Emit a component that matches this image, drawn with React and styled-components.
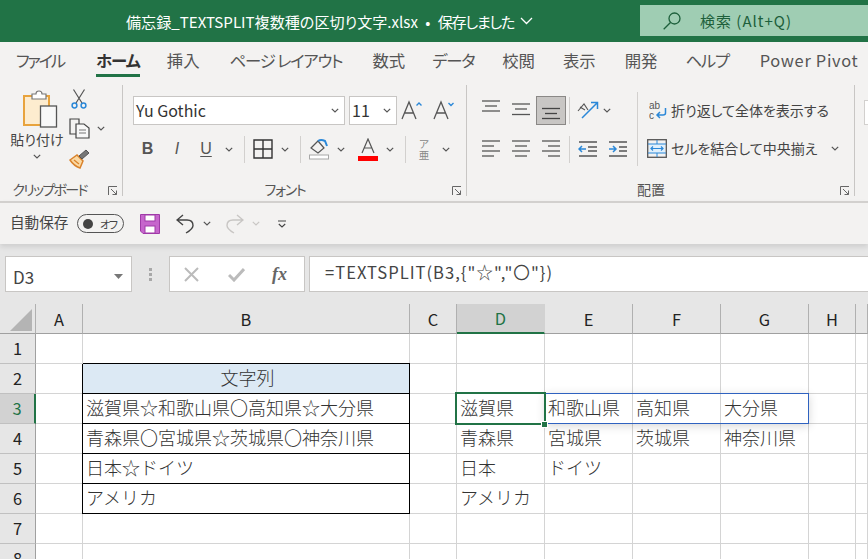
import React from 'react'
import styled, { createGlobalStyle } from 'styled-components'

const FONT = '"Noto Sans CJK JP", "Noto Sans", sans-serif'

const GlobalStyle = createGlobalStyle`
    html, body {
        margin: 0;
        padding: 0;
        height: 100%;
        overflow: hidden;
        background: #e6e6e6;
    }
    * { box-sizing: border-box; }
    body { font-family: ${ FONT }; color: #444; font-feature-settings: "palt"; }
`

const Window = styled.div`
    width: 868px;
    height: 559px;
    overflow: hidden;
    display: flex;
    flex-direction: column;
`

/* title bar */
const TitleBar = styled.header`
    height: 42px;
    flex: none;
    background: #217346;
    display: flex;
    align-items: flex-start;
`
const DocTitle = styled.div`
    margin-left: 126px;
    width: 514px;
    height: 42px;
    display: flex;
    align-items: center;
    gap: 6px;
    color: #fff;
    font-size: 15.1px;
    word-spacing: 4px;
    white-space: nowrap;
`
const SavedState = styled.span`
    letter-spacing: -1.3px;
`
const SearchBox = styled.div`
    margin-top: 5px;
    flex: 1;
    height: 31px;
    background: #9fcdb3;
    display: flex;
    align-items: center;
    padding-left: 23px;
    gap: 19px;
    color: #1d5f3b;
    font-size: 15px;
    letter-spacing: 1px;
`

/* tabs */
const TabBar = styled.nav`
    height: 36px;
    flex: none;
    background: #f3f2f1;
    display: flex;
    align-items: flex-start;
`
const Tab = styled.div`
    height: 35px;
    margin-left: ${ props => props.$gap }px;
    padding-top: 6px;
    font-size: 16.4px;
    line-height: 24px;
    white-space: nowrap;
    letter-spacing: ${ props => props.$spacing || 0 }px;
    color: ${ props => props.$active ? '#333' : '#555' };
    font-weight: ${ props => props.$active ? 700 : 400 };
    border-bottom: 3px solid ${ props => props.$active ? '#217346' : 'transparent' };
`

/* ribbon */
const Ribbon = styled.section`
    height: 123px;
    flex: none;
    background: #f3f2f1;
    display: flex;
`
const Group = styled.div`
    width: ${ props => props.$width }px;
    flex: none;
    height: 118px;
    display: flex;
    flex-direction: column;
    position: relative;
    &::after {
        content: '';
        position: absolute;
        right: 0;
        top: 7px;
        bottom: 0;
        width: 1px;
        background: #c8c6c4;
    }
`
const GroupBody = styled.div`
    flex: 1;
    display: flex;
    padding-left: ${ props => props.$pad || 0 }px;
`
const GroupFooter = styled.div`
    height: 20px;
    position: relative;
    display: flex;
    justify-content: center;
    padding: 3px ${ props => props.$right ?? 20 }px 0 0;
    font-size: 14px;
    line-height: 20px;
    white-space: nowrap;
    letter-spacing: ${ props => props.$spacing || 0 }px;
    color: #555;
`
const Launcher = styled.svg`
    position: absolute;
    right: 5px;
    top: 10px;
    width: 10px;
    height: 10px;
`
const ToolRows = styled.div`
    padding-top: 17px;
    display: flex;
    flex-direction: column;
    gap: 9px;
`
const ToolRow = styled.div`
    height: 30px;
    display: flex;
    align-items: center;
`
const Tool = styled.div`
    width: ${ props => props.$w || 30 }px;
    height: 29px;
    flex: none;
    display: flex;
    align-items: center;
    justify-content: center;
    color: #555;
`
const ActiveTool = styled(Tool)`
    background: #c8c6c4;
    border: 1px solid #8a8886;
`
const BoldLetter = styled.span`
    font-family: "Liberation Sans", sans-serif;
    font-size: 16px;
    font-weight: ${ props => props.$bold ? 700 : 400 };
    font-style: ${ props => props.$italic ? 'italic' : 'normal' };
    text-decoration: ${ props => props.$under ? 'underline' : 'none' };
    text-underline-offset: 2px;
    color: #555;
`
const Phonetic = styled.span`
    font-size: 10.5px;
    line-height: 11px;
    width: 12px;
    text-align: center;
    color: #888;
`
const Sep = styled.div`
    width: 1px;
    height: 27px;
    flex: none;
    background: #d2d0ce;
    margin: 0 ${ props => props.$r ?? 5 }px 0 ${ props => props.$l ?? 6 }px;
`
const TallSep = styled.div`
    width: 1px;
    height: 74px;
    margin: 14px 11px 0 4px;
    flex: none;
    background: #d2d0ce;
`
const Select = styled.div`
    height: 29px;
    width: ${ props => props.$w }px;
    margin-right: ${ props => props.$mr || 0 }px;
    flex: none;
    background: #fff;
    border: 1px solid #c8c6c4;
    display: flex;
    align-items: center;
    justify-content: space-between;
    padding: 0 5px 0 2px;
    font-size: 16px;
    color: #333;
`
const PasteButton = styled.div`
    width: 66px;
    padding: 12px 0 0 12px;
    display: flex;
    flex-direction: column;
    align-items: flex-start;
    font-size: 14px;
    color: #444;
    line-height: 18px;
    white-space: nowrap;
    & > svg { margin-left: 10px; }
`
const PasteLabel = styled.div`
    margin-top: 2px;
    width: 50px;
    display: flex;
    flex-direction: column;
    align-items: center;
    gap: 6px;
`
const ClipTools = styled.div`
    padding-top: 10px;
    display: flex;
    flex-direction: column;
    gap: 9px;
`
const ClipTool = styled.div`
    height: 21px;
    display: flex;
    align-items: center;
    gap: 7px;
    margin-left: ${ props => props.$ml || 0 }px;
`
const WideTool = styled.div`
    height: 29px;
    display: flex;
    align-items: center;
    font-size: 14px;
    color: #444;
    white-space: nowrap;
    gap: 4px;
    margin-left: ${ props => props.$ml || 0 }px;
`
const NextGroupEdge = styled.div`
    margin: 22px 0 0 9px;
    flex: 1;
    height: 25px;
    background: #fff;
    border: 1px solid #d2d0ce;
    border-right: 0;
`

/* quick access */
const Quick = styled.div`
    height: 43px;
    flex: none;
    background: #f3f2f1;
    border-top: 2px solid #d2d0ce;
    box-shadow: 0 3px 5px rgba(0, 0, 0, 0.1);
    display: flex;
    align-items: center;
    padding-left: 10px;
    font-size: 14.6px;
    color: #444;
    position: relative;
`
const ToggleLabel = styled.span`
    width: 67px;
    flex: none;
    position: relative;
    top: -2px;
    font-feature-settings: normal;
`
const AutoToggle = styled.div`
    width: 47px;
    height: 19px;
    flex: none;
    border: 1px solid #555;
    border-radius: 10px;
    display: flex;
    align-items: center;
    padding-left: 5px;
    gap: 7px;
    font-size: 11px;
    letter-spacing: -1.4px;
    color: #444;
    margin-right: 16px;
    &::before {
        content: '';
        width: 10px;
        height: 10px;
        border-radius: 50%;
        background: #444;
    }
`
const QuickItem = styled.div`
    margin-left: ${ props => props.$ml || 0 }px;
    display: flex;
    align-items: center;
    flex: none;
`

/* formula bar */
const FormulaArea = styled.div`
    height: 60px;
    flex: none;
    background: #e6e6e6;
    padding-top: 12px;
    padding-left: 5px;
    display: flex;
    align-items: flex-start;
`
const NameBox = styled.div`
    width: 127px;
    height: 36px;
    flex: none;
    background: #fff;
    border: 1px solid #c8c6c4;
    display: flex;
    align-items: center;
    justify-content: space-between;
    padding: 5px 8px 0 7px;
    font-size: 17px;
    color: #444;
`
const Grip = styled.div`
    width: 37px;
    height: 36px;
    flex: none;
    display: flex;
    flex-direction: column;
    align-items: center;
    justify-content: center;
    gap: 2px;
    & > i {
        width: 3px;
        height: 3px;
        background: #a8a8a8;
    }
`
const FormulaButtons = styled.div`
    width: 136px;
    height: 36px;
    flex: none;
    background: #fff;
    border: 1px solid #c8c6c4;
    display: flex;
    align-items: center;
    padding-left: 14px;
    gap: 29px;
`
const Fx = styled.span`
    font-family: "Liberation Serif", serif;
    font-style: italic;
    font-weight: 700;
    font-size: 18px;
    color: #666;
    margin-left: -2px;
`
const FormulaInput = styled.div`
    margin-left: 4px;
    flex: 1;
    height: 36px;
    background: #fff;
    border-top: 1px solid #c8c6c4;
    border-bottom: 1px solid #c8c6c4;
    border-left: 1px solid #c8c6c4;
    padding-left: 15px;
    font-size: 16.6px;
    letter-spacing: 1px;
    line-height: 31px;
    color: #444;
    white-space: nowrap;
    font-feature-settings: normal;
`

/* sheet */
const Sheet = styled.div`
    flex: 1;
    position: relative;
    display: grid;
    grid-template-columns: 36px 47px 327px 47px 88px 88px 88px 88px 47px 1fr;
    grid-auto-rows: 30px;
    background: #fff;
    overflow: hidden;
    font-feature-settings: normal;
`
const ColHead = styled.div`
    background: ${ props => props.$active ? '#d2d2d2' : '#e6e6e6' };
    border-right: 1px solid ${ props => props.$active ? '#d2d2d2' : '#b0b0b0' };
    border-bottom: ${ props => props.$active ? '2px solid #217346' : '1px solid #a0a0a0' };
    color: ${ props => props.$active ? '#217346' : '#222' };
    display: flex;
    align-items: center;
    justify-content: center;
    font-size: 16.4px;
    position: relative;
`
const Corner = styled(ColHead)`
    &::after {
        content: '';
        position: absolute;
        left: 10px;
        top: 5px;
        width: 22px;
        height: 22px;
        background: #b4b4b4;
        clip-path: polygon(100% 0, 100% 100%, 0 100%);
    }
`
const RowHead = styled.div`
    background: ${ props => props.$active ? '#d2d2d2' : '#e6e6e6' };
    border-right: ${ props => props.$active ? '2px solid #217346' : '1px solid #a0a0a0' };
    border-bottom: 1px solid #c0c0c0;
    color: ${ props => props.$active ? '#217346' : '#222' };
    display: flex;
    align-items: center;
    justify-content: center;
    padding-bottom: 2px;
    font-size: 16.4px;
`
const Cell = styled.div`
    border-right: 1px solid ${ props => props.$boxed ? '#000' : '#d4d4d4' };
    border-bottom: 1px solid ${ props => props.$boxed ? '#000' : '#d4d4d4' };
    background: ${ props => props.$head ? '#dce9f4' : '#fff' };
    box-shadow: ${ props => props.$boxed ? '-1px 0 0 #000, 0 -1px 0 #000' : 'none' };
    padding: 0 0 3px 3px;
    display: flex;
    align-items: center;
    justify-content: ${ props => props.$head ? 'center' : 'flex-start' };
    font-size: 18px;
    font-weight: 300;
    color: #333;
    white-space: nowrap;
    overflow: visible;
`
const SpillRange = styled.div`
    position: absolute;
    left: 545px;
    top: 89px;
    width: 264px;
    height: 31px;
    border: 1px solid #2f62c0;
    border-left: 0;
    box-shadow: 0 2px 10px rgba(0, 0, 0, 0.16);
    pointer-events: none;
`
const ActiveCell = styled.div`
    position: absolute;
    left: 455px;
    top: 88px;
    width: 91px;
    height: 33px;
    border: 2px solid #217346;
`
const FillHandle = styled.div`
    position: absolute;
    left: 541px;
    top: 117px;
    width: 7px;
    height: 7px;
    background: #217346;
    border: 1px solid #fff;
`

/* drawings */
const Chevron = ({ color = '#555', w = 8 }) => (
    <svg width={ w } height="5" viewBox="0 0 8 5" fill="none" stroke={ color } strokeWidth="1.2">
        <path d="M0.8 0.8 L4 4 L7.2 0.8" />
    </svg>
)

const LauncherIcon = () => (
    <Launcher viewBox="0 0 10 10" fill="none" stroke="#666" strokeWidth="1">
        <path d="M0.5 9 V0.5 H9 M3 3 L8.5 8.5 M8.5 4.5 V8.5 H4.5" />
    </Launcher>
)

const PasteIcon = () => (
    <svg width="36" height="38" viewBox="0 0 36 38">
        <rect x="2" y="6" width="25" height="29" fill="#fdeccf" stroke="#e8a33d" strokeWidth="2" />
        <path d="M10 6 V4 H14 Q14 1 17 1 Q20 1 20 4 H24 V9 H10 Z" fill="#fff" stroke="#777" strokeWidth="1.2" />
        <rect x="18.5" y="16" width="16" height="21" fill="#f8f8f8" stroke="#555" strokeWidth="1.3" />
    </svg>
)

const ScissorsIcon = () => (
    <svg width="16" height="20" viewBox="0 0 16 20" fill="none" strokeWidth="1.2">
        <path d="M2.5 0.5 L11 14 M13.5 0.5 L5 14" stroke="#555" />
        <circle cx="3.5" cy="16.5" r="2.4" stroke="#2b88d8" strokeWidth="1.5" />
        <circle cx="12.5" cy="16.5" r="2.4" stroke="#2b88d8" strokeWidth="1.5" />
    </svg>
)

const CopyIcon = () => (
    <svg width="21" height="21" viewBox="0 0 21 21" fill="none" stroke="#444" strokeWidth="1.2">
        <path d="M7 16 H1 V1 H10 V6" />
        <path d="M7 6 H15 L20 10 V20 H7 Z" fill="#f8f8f8" />
        <path d="M10 12 H17 M10 15 H17" stroke="#777" />
    </svg>
)

const BrushIcon = () => (
    <svg width="21" height="20" viewBox="0 0 21 20">
        <path d="M1 11 L8 6 L14 12 L11 19 Q5 17 1 11 Z" fill="#fbd9a3" stroke="#d9822b" strokeWidth="1.5" />
        <path d="M5 11 L10 15" stroke="#d9822b" strokeWidth="1.2" />
        <path d="M10 7 L17 1 L20 4 L13 10 Z" fill="#777" stroke="#555" />
    </svg>
)

const GrowFont = ({ down }) => (
    <svg width="22" height="22" viewBox="0 0 22 22" fill="none" stroke="#555" strokeWidth="1.3">
        <path d="M1 20 L8 3 L15 20 M3.6 14 H12.4" />
        <path d={ down ? 'M15.5 4 L18 6.5 L20.5 4' : 'M15.5 6.5 L18 4 L20.5 6.5' } stroke="#2b88d8" strokeWidth="1.4" />
    </svg>
)

const BordersIcon = () => (
    <svg width="20" height="20" viewBox="0 0 20 20" fill="none" stroke="#333" strokeWidth="1.4">
        <path d="M1 1 H19 V19 H1 Z M10 1 V19 M1 10 H19" />
    </svg>
)

const FillIcon = () => (
    <svg width="22" height="22" viewBox="0 0 22 22">
        <path d="M3 10 L10 3 L16 10 L10 15 Z" fill="none" stroke="#555" strokeWidth="1.2" />
        <path d="M10 3 Q13 1 17 3 L19 8" fill="none" stroke="#2b88d8" strokeWidth="2" />
        <rect x="1.5" y="17" width="19" height="4" fill="#fff" stroke="#a8a8a8" />
    </svg>
)

const FontColorIcon = () => (
    <svg width="20" height="23" viewBox="0 0 20 23">
        <path d="M4 15 L10 1 L16 15 M6 10 H14" fill="none" stroke="#555" strokeWidth="1.2" />
        <rect x="0" y="18" width="20" height="5" fill="#f00" />
    </svg>
)

const Lines = ({ rows, color = '#555' }) => (
    <svg width="20" height="20" viewBox="0 0 20 20" fill="none" stroke={ color } strokeWidth="1.3">
        { rows.map(([y, x1, x2]) => <path key={ y } d={ `M${ x1 } ${ y } H${ x2 }` } />) }
    </svg>
)

const OrientIcon = () => (
    <svg width="22" height="20" viewBox="0 0 22 20" fill="none">
        <path d="M5 18 L20 3 M14 2.5 H20.5 V9" stroke="#2b88d8" strokeWidth="1.5" />
        <path d="M1 11 L7 4 L11 10 M3 7 L8 10" stroke="#555" strokeWidth="1.1" />
    </svg>
)

const IndentIcon = ({ flip }) => (
    <svg width="20" height="18" viewBox="0 0 20 18" fill="none" strokeWidth="1.3">
        <path d={ flip ? 'M1 2 H19 M11 7 H19 M11 11 H19 M1 16 H19' : 'M1 2 H19 M10 7 H19 M10 11 H19 M1 16 H19' } stroke="#555" />
        <path d={ flip ? 'M1 9 H8 M5 6 L8 9 L5 12' : 'M1 9 H8 M4 6 L1 9 L4 12' } stroke="#2b88d8" strokeWidth="1.5" />
    </svg>
)

const WrapIcon = () => (
    <svg width="18" height="20" viewBox="0 0 18 20" fill="none">
        <text x="0" y="9" fontSize="10" fill="#555" fontFamily="Liberation Sans">ab</text>
        <text x="0" y="19" fontSize="10" fill="#555" fontFamily="Liberation Sans">c</text>
        <path d="M16.5 8 V13 Q16.5 15 14 15 H8 M11 12 L8 15 L11 18" stroke="#2b88d8" strokeWidth="1.5" />
    </svg>
)

const MergeIcon = () => (
    <svg width="20" height="19" viewBox="0 0 20 19" fill="none">
        <rect x="0.7" y="0.7" width="18.6" height="17.6" stroke="#555" strokeWidth="1.3" />
        <rect x="2" y="5" width="16" height="9" fill="#e1f0fb" />
        <path d="M1 5 H19 M1 14 H19 M10 1 V5 M10 14 V18" stroke="#2b88d8" strokeWidth="1" />
        <path d="M4 9.5 H16 M6 7.5 L4 9.5 L6 11.5 M14 7.5 L16 9.5 L14 11.5" stroke="#2b88d8" strokeWidth="1.2" />
    </svg>
)

const SaveIcon = () => (
    <svg width="20" height="20" viewBox="0 0 20 20">
        <path d="M0.5 0.5 H19.5 V19.5 H3 L0.5 17 Z" fill="#c666cc" stroke="#a03aa8" />
        <rect x="5" y="1" width="10" height="6" fill="#fff" stroke="#a03aa8" />
        <rect x="5" y="12" width="10" height="7" fill="#fff" stroke="#a03aa8" />
    </svg>
)

const UndoIcon = ({ redo }) => (
    <svg width="19" height="20" viewBox="0 0 19 20" fill="none" stroke={ redo ? '#c8c6c4' : '#444' } strokeWidth="1.4"
        style={ redo ? { transform: 'scaleX(-1)' } : undefined }>
        <path d="M7 1 L1 6 L7 11 M1 6 H11 Q17 6 17 11.5 Q17 15 10 19" />
    </svg>
)

const SearchGlass = () => (
    <svg width="18" height="18" viewBox="0 0 18 18" fill="none" stroke="#1d5f3b" strokeWidth="1.3">
        <circle cx="11.5" cy="6.5" r="5.5" />
        <path d="M7.5 10.5 L0.7 17.3" />
    </svg>
)

// gap before each tab, spacing squeezes the katakana names
const ribbonTabs = [
    { name: 'ファイル', gap: 16, spacing: -2.2 },
    { name: 'ホーム', gap: 32, spacing: -1, active: true },
    { name: '挿入', gap: 27 },
    { name: 'ページ レイアウト', gap: 30, spacing: -1.2 },
    { name: '数式', gap: 30 },
    { name: 'データ', gap: 27, spacing: -1.3 },
    { name: '校閲', gap: 28 },
    { name: '表示', gap: 28 },
    { name: '開発', gap: 29 },
    { name: 'ヘルプ', gap: 28, spacing: -1.3 },
    { name: 'Power Pivot', gap: 31, spacing: 0.7 },
]

const columns = ['A', 'B', 'C', 'D', 'E', 'F', 'G', 'H', '']

// row -> cell text by column, boxed is the table in column B
const sheetRows = [
    { },
    { B: '文字列' },
    { B: '滋賀県☆和歌山県〇高知県☆大分県', D: '滋賀県', E: '和歌山県', F: '高知県', G: '大分県' },
    { B: '青森県〇宮城県☆茨城県〇神奈川県', D: '青森県', E: '宮城県', F: '茨城県', G: '神奈川県' },
    { B: '日本☆ドイツ', D: '日本', E: 'ドイツ' },
    { B: 'アメリカ', D: 'アメリカ' },
    { },
    { },
]

const App = () => (
    <Window>
        <GlobalStyle />
        <TitleBar>
            <DocTitle>
                <span>備忘録_TEXTSPLIT複数種の区切り文字.xlsx • <SavedState>保存しました</SavedState></span>
                <svg width="13" height="8" viewBox="0 0 13 8" fill="none" stroke="#fff" strokeWidth="1.3">
                    <path d="M1 1 L6.5 6.5 L12 1" />
                </svg>
            </DocTitle>
            <SearchBox>
                <SearchGlass />
                <span>検索 (Alt+Q)</span>
            </SearchBox>
        </TitleBar>

        <TabBar>
            { ribbonTabs.map(tab => (
                <Tab key={ tab.name } $gap={ tab.gap } $spacing={ tab.spacing } $active={ tab.active }>{ tab.name }</Tab>
            )) }
        </TabBar>

        <Ribbon>
            <Group $width={ 123 }>
                <GroupBody>
                    <PasteButton>
                        <PasteIcon />
                        <PasteLabel>
                            貼り付け
                            <Chevron />
                        </PasteLabel>
                    </PasteButton>
                    <ClipTools>
                        <ClipTool $ml={ 5 }><ScissorsIcon /></ClipTool>
                        <ClipTool $ml={ 3 }><CopyIcon /><Chevron /></ClipTool>
                        <ClipTool $ml={ 3 }><BrushIcon /></ClipTool>
                    </ClipTools>
                </GroupBody>
                <GroupFooter $spacing={ -1.7 } $right={ 24 }>クリップボード<LauncherIcon /></GroupFooter>
            </Group>

            <Group $width={ 344 }>
                <GroupBody $pad={ 10 }>
                    <ToolRows>
                        <ToolRow>
                            <Select $w={ 212 } $mr={ 4 }>Yu Gothic<Chevron /></Select>
                            <Select $w={ 48 }>11<Chevron /></Select>
                            <Tool $w={ 30 }><GrowFont /></Tool>
                            <Tool $w={ 33 }><GrowFont down /></Tool>
                        </ToolRow>
                        <ToolRow>
                            <Tool $w={ 29 }><BoldLetter $bold>B</BoldLetter></Tool>
                            <Tool $w={ 30 }><BoldLetter $italic>I</BoldLetter></Tool>
                            <Tool $w={ 28 }><BoldLetter $under>U</BoldLetter></Tool>
                            <Tool $w={ 18 }><Chevron /></Tool>
                            <Sep />
                            <Tool $w={ 26 }><BordersIcon /></Tool>
                            <Tool $w={ 18 }><Chevron /></Tool>
                            <Sep />
                            <Tool $w={ 26 }><FillIcon /></Tool>
                            <Tool $w={ 18 }><Chevron /></Tool>
                            <Tool $w={ 36 }><FontColorIcon /></Tool>
                            <Tool $w={ 8 }><Chevron /></Tool>
                            <Sep $l={ 11 } />
                            <Tool $w={ 26 }><Phonetic>ア亜</Phonetic></Tool>
                            <Tool $w={ 18 }><Chevron /></Tool>
                        </ToolRow>
                    </ToolRows>
                </GroupBody>
                <GroupFooter $spacing={ -1.2 }>フォント<LauncherIcon /></GroupFooter>
            </Group>

            <Group $width={ 388 }>
                <GroupBody $pad={ 9 }>
                    <ToolRows>
                        <ToolRow>
                            <Tool><Lines rows={ [[1, 1, 19], [6, 4, 16], [11, 1, 19]] } /></Tool>
                            <Tool><Lines rows={ [[4, 1, 19], [9, 4, 16], [14.5, 1, 19]] } /></Tool>
                            <ActiveTool><Lines rows={ [[8.5, 1, 19], [13.5, 4, 16], [18.5, 1, 19]] } color="#444" /></ActiveTool>
                            <Sep $l={ 3 } $r={ 3 } />
                            <Tool><OrientIcon /></Tool>
                            <Tool $w={ 8 }><Chevron /></Tool>
                        </ToolRow>
                        <ToolRow>
                            <Tool><Lines rows={ [[2, 1, 19], [7, 1, 13], [12, 1, 19], [17, 1, 13]] } /></Tool>
                            <Tool><Lines rows={ [[2, 1, 19], [7, 4, 16], [12, 1, 19], [17, 4, 16]] } /></Tool>
                            <Tool><Lines rows={ [[2, 1, 19], [7, 7, 19], [12, 1, 19], [17, 7, 19]] } /></Tool>
                            <Sep $l={ 3 } $r={ 3 } />
                            <Tool><IndentIcon /></Tool>
                            <Tool><IndentIcon flip /></Tool>
                        </ToolRow>
                    </ToolRows>
                    <TallSep />
                    <ToolRows>
                        <WideTool><WrapIcon />折り返して全体を表示する</WideTool>
                        <ToolRow>
                            <WideTool $ml={ -2 }><MergeIcon />セルを結合して中央揃え</WideTool>
                            <Tool $w={ 36 }><Chevron /></Tool>
                        </ToolRow>
                    </ToolRows>
                </GroupBody>
                <GroupFooter>配置<LauncherIcon /></GroupFooter>
            </Group>
            <NextGroupEdge />
        </Ribbon>

        <Quick>
            <ToggleLabel>自動保存</ToggleLabel>
            <AutoToggle>オフ</AutoToggle>
            <QuickItem><SaveIcon /></QuickItem>
            <QuickItem $ml={ 16 }><UndoIcon /></QuickItem>
            <QuickItem $ml={ 8 }><Chevron /></QuickItem>
            <QuickItem $ml={ 14 }><UndoIcon redo /></QuickItem>
            <QuickItem $ml={ 8 }><Chevron color="#c8c6c4" /></QuickItem>
            <QuickItem $ml={ 18 }>
                <svg width="8" height="8" viewBox="0 0 8 8" fill="none" stroke="#444" strokeWidth="1.1">
                    <path d="M0 1 H8 M0.8 4 L4 7 L7.2 4" />
                </svg>
            </QuickItem>
        </Quick>

        <FormulaArea>
            <NameBox>
                D3
                <svg width="9" height="5" viewBox="0 0 9 5"><path d="M0 0 H9 L4.5 5 Z" fill="#777" /></svg>
            </NameBox>
            <Grip><i /><i /><i /></Grip>
            <FormulaButtons>
                <svg width="15" height="15" viewBox="0 0 15 15" fill="none" stroke="#bbb" strokeWidth="2"><path d="M1 1 L14 14 M14 1 L1 14" /></svg>
                <svg width="17" height="15" viewBox="0 0 17 15" fill="none" stroke="#bbb" strokeWidth="3"><path d="M1 8 L6 13 L16 2" /></svg>
                <Fx>fx</Fx>
            </FormulaButtons>
            <FormulaInput>=TEXTSPLIT(B3,{'{'}"☆","〇"{'}'})</FormulaInput>
        </FormulaArea>

        <Sheet>
            <Corner />
            { columns.map((col, i) => <ColHead key={ i } $active={ col === 'D' }>{ col }</ColHead>) }
            { sheetRows.map((row, r) => (
                <React.Fragment key={ r }>
                    <RowHead $active={ r === 2 }>{ r + 1 }</RowHead>
                    { columns.map((col, c) => (
                        <Cell
                            key={ c }
                            $boxed={ col === 'B' && r >= 1 && r <= 5 }
                            $head={ col === 'B' && r === 1 }
                        >
                            { row[col] }
                        </Cell>
                    )) }
                </React.Fragment>
            )) }
            <SpillRange />
            <ActiveCell />
            <FillHandle />
        </Sheet>
    </Window>
)

export default App
